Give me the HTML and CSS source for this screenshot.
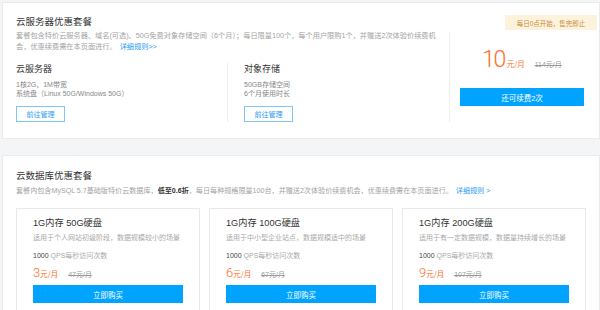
FILE: index.html
```html
<!DOCTYPE html>
<html lang="zh-CN">

<head>
    <meta charset="UTF-8">
    <title>优惠套餐</title>
    <meta name="viewport" content="width=device-width, initial-scale=1">
    <link rel="stylesheet" href="styles.css">
</head>

<body>
    <div class="panel server-panel">
        <div class="server-main">
            <h2 class="panel-title">云服务器优惠套餐</h2>
            <p class="panel-desc">套餐包含特价云服务器、域名(可选)、50G免费对象存储空间（6个月）；每日限量100个，每个用户限购1个，并赠送2次体验价续费机会，优惠续费需在本页面进行。<a href="#" class="link">详细规则&gt;&gt;</a></p>
            <div class="products">
                <div class="product">
                    <h3>云服务器</h3>
                    <p>1核2G、1M带宽<br>系统盘（Linux 50G/Windows 50G）</p>
                    <a href="#" class="btn-outline">前往管理</a>
                </div>
                <div class="product">
                    <h3>对象存储</h3>
                    <p>50GB存储空间<br>6个月使用时长</p>
                    <a href="#" class="btn-outline">前往管理</a>
                </div>
            </div>
        </div>
        <div class="server-side">
            <div class="price-row">
                <span class="price price-big">10<small>元/月</small></span>
                <s class="old-price">114元/月</s>
            </div>
            <a href="#" class="btn-primary">还可续费2次</a>
        </div>
        <span class="badge">每日0点开始，售完即止</span>
    </div>

    <div class="panel db-panel">
        <h2 class="panel-title">云数据库优惠套餐</h2>
        <p class="panel-desc">套餐内包含MySQL 5.7基础版特价云数据库，<b>低至0.6折</b>，每日每种规格限量100台，并赠送2次体验价续费机会，优惠续费需在本页面进行。<a href="#" class="link">详细规则 &gt;</a></p>
        <div class="cards">
            <div class="card">
                <h3>1G内存 50G硬盘</h3>
                <p class="card-desc">适用于个人网站初级阶段，数据规模较小的场景</p>
                <p class="qps"><b>1000</b> QPS每秒访问次数</p>
                <div class="card-price">
                    <span class="price">3<small>元/月</small></span>
                    <s class="old-price">47元/月</s>
                </div>
                <a href="#" class="btn-primary">立即购买</a>
            </div>
            <div class="card">
                <h3>1G内存 100G硬盘</h3>
                <p class="card-desc">适用于中小型企业站点，数据规模适中的场景</p>
                <p class="qps"><b>1000</b> QPS每秒访问次数</p>
                <div class="card-price">
                    <span class="price">6<small>元/月</small></span>
                    <s class="old-price">67元/月</s>
                </div>
                <a href="#" class="btn-primary">立即购买</a>
            </div>
            <div class="card">
                <h3>1G内存 200G硬盘</h3>
                <p class="card-desc">适用于有一定数据规模，数据量持续增长的场景</p>
                <p class="qps"><b>1000</b> QPS每秒访问次数</p>
                <div class="card-price">
                    <span class="price">9<small>元/月</small></span>
                    <s class="old-price">107元/月</s>
                </div>
                <a href="#" class="btn-primary">立即购买</a>
            </div>
        </div>
    </div>
</body>

</html>
```

FILE: styles.css
```css
* {
    margin: 0;
    padding: 0;
    box-sizing: border-box;
}

body {
    font-family: 'Liberation Sans', 'Noto Sans CJK SC', sans-serif;
    background-color: #f4f5f7;
    padding: 2px 0 0 2px;
    overflow: hidden;
    color: #333;
}

a {
    text-decoration: none;
}

.panel {
    background-color: #fff;
    border: 1px solid #ebebeb;
}

.server-panel {
    display: flex;
    position: relative;
}

.server-main {
    flex: 1;
    padding: 13px 6px 16px 13px;
}

.panel-title {
    font-size: 9.5px;
    line-height: 12px;
    font-weight: normal;
    color: #333;
}

.panel-desc {
    font-size: 7.2px;
    line-height: 11px;
    color: #a3a3a3;
    margin-top: 2px;
}

.panel-desc b {
    color: #333;
}

.link {
    color: #2b9cf2;
    margin-left: 3px;
}

.products {
    display: flex;
    margin-top: 11px;
}

.product {
    width: 212px;
    border-right: 1px solid #eee;
}

.product + .product {
    border-right: none;
    padding-left: 16px;
}

.product h3 {
    font-size: 9px;
    line-height: 12px;
    font-weight: normal;
    color: #333;
}

.product p {
    font-size: 7px;
    line-height: 9px;
    color: #888;
    margin-top: 4.5px;
}

.btn-outline {
    display: flex;
    align-items: center;
    justify-content: center;
    width: 49px;
    height: 16px;
    margin-top: 8.5px;
    border: 1px solid #7ec6f5;
    color: #2b9cf2;
    font-size: 7px;
}

.server-side {
    width: 150px;
    flex: none;
    margin: 29px 0 16px;
    padding: 16px 15px 0 10px;
    border-left: 1px solid #eee;
}

.price-row {
    display: flex;
    align-items: baseline;
    justify-content: center;
    line-height: 24px;
}

.price {
    color: #ff6d2b;
    font-size: 13px;
    font-family: Roboto, 'Noto Sans CJK SC', sans-serif;
    font-weight: 300;
}

.price small {
    font-size: 7.5px;
    font-family: 'Noto Sans CJK SC', sans-serif;
    font-weight: normal;
}

.price-big {
    font-size: 23px;
    letter-spacing: -1.5px;
}

.price-big small {
    letter-spacing: 0;
    margin-left: 2px;
}

.old-price {
    font-size: 7px;
    color: #999;
    margin-left: 10px;
}

.btn-primary {
    display: flex;
    align-items: center;
    justify-content: center;
    height: 18px;
    margin-top: 11px;
    background-color: #00a4ff;
    color: #fff;
    font-size: 7.5px;
}

.badge {
    position: absolute;
    top: 12px;
    right: 2px;
    width: 92px;
    height: 15px;
    display: flex;
    align-items: center;
    justify-content: center;
    background-color: #fdf3dc;
    color: #c58b3c;
    font-size: 6.5px;
}

.db-panel {
    margin-top: 16px;
    padding: 14px 0 20px 13px;
}

.db-panel .panel-desc {
    font-size: 7.1px;
    margin-top: 4px;
}

.cards {
    display: grid;
    grid-template-columns: repeat(3, 184px);
    gap: 9px;
    margin-top: 11px;
}

.card {
    border: 1px solid #e9e9e9;
    padding: 8px 16px 16px;
}

.card h3 {
    font-size: 9.2px;
    line-height: 12px;
    font-weight: normal;
    color: #333;
}

.card-desc {
    font-size: 7px;
    line-height: 11px;
    color: #aaa;
    margin-top: 2.5px;
}

.qps {
    font-size: 7px;
    line-height: 11px;
    color: #aaa;
    margin-top: 7px;
}

.qps b {
    color: #444;
    font-weight: normal;
}

.card-price {
    display: flex;
    align-items: baseline;
    line-height: 14px;
    margin-top: 5.5px;
}

.card .btn-primary {
    margin-top: 3px;
}
```
